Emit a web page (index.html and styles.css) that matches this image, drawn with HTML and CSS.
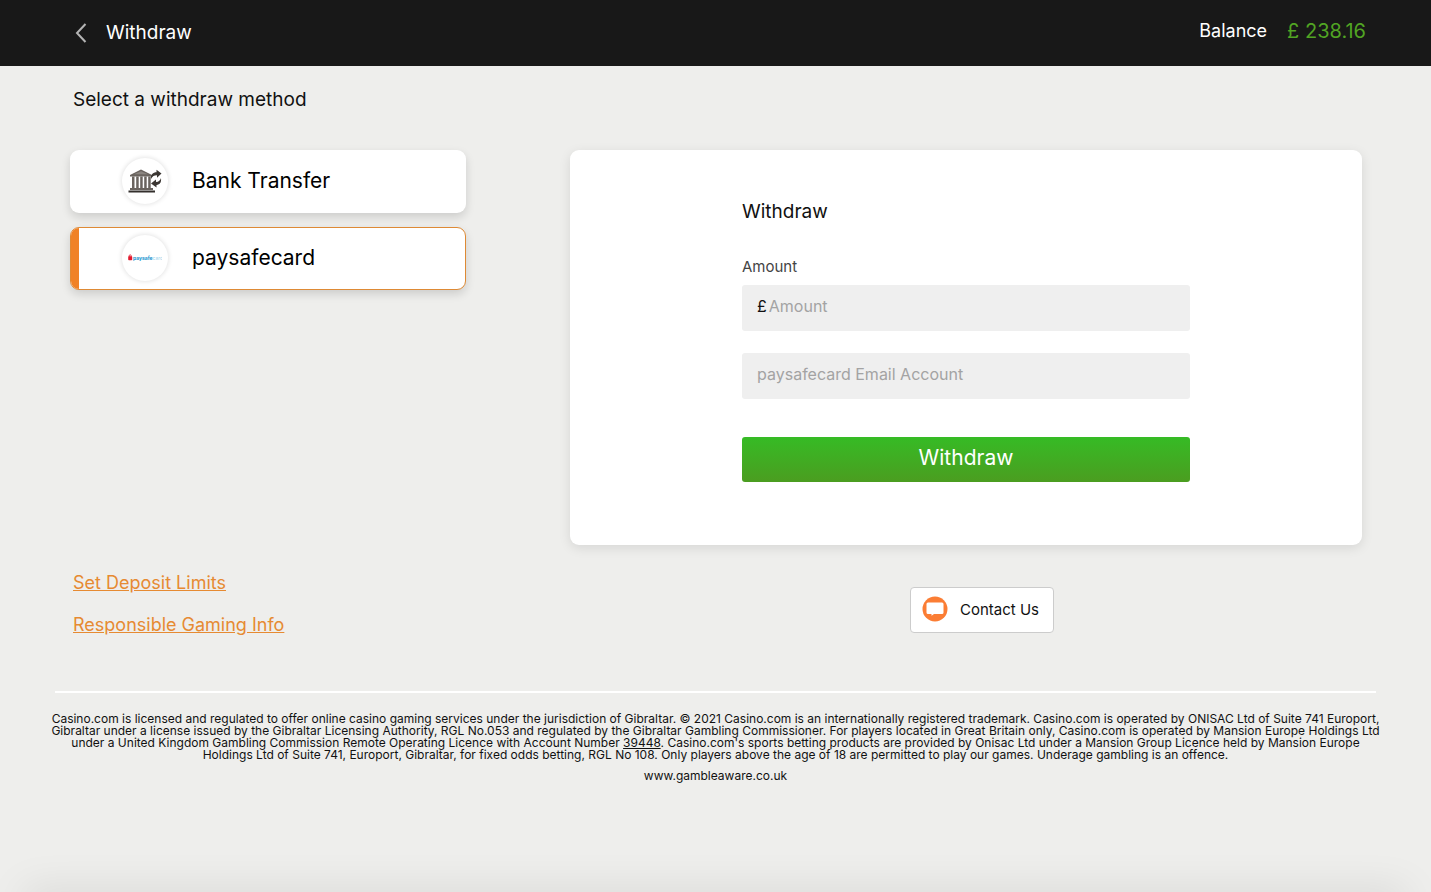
FILE: index.html
```html
<!DOCTYPE html>
<html lang="en">
	<head>
		<meta charset="utf-8">
		<meta name="viewport" content="width=device-width, initial-scale=1">
		<title>Withdraw</title>
		<link rel="stylesheet" href="styles.css">
	</head>

	<body>
		<header id="topbar">
			<a class="back" href="#">
				<svg width="12" height="20" viewBox="0 0 12 20" fill="none" stroke="#b4b4b4" stroke-width="2" aria-hidden="true">
					<path d="M10.5 1 L2 10 L10.5 19"/>
				</svg>
				<span>Withdraw</span>
			</a>
			<div class="balance">
				<span>Balance</span>
				<span class="sum">£ 238.16</span>
			</div>
		</header>

		<main>
			<h1>Select a withdraw method</h1>
			<div class="columns">
				<div class="methods">
					<button class="method" type="button">
						<span class="logo">
							<svg width="34" height="24" viewBox="0 0 34 24" aria-hidden="true">
								<g fill="#6a645f">
									<path d="M2 6 L13 0.5 L24 6 V7.5 H2 Z"/>
									<path d="M4 7.5 h2.5 v11.5 h-2.5z M8.2 7.5 h2.5 v11.5 h-2.5z M12.2 7.5 h2.5 v11.5 h-2.5z M16.2 7.5 h2.5 v11.5 h-2.5z M20.2 7.5 h2.5 v11.5 h-2.5z"/>
									<path d="M2 19 H25 V21 H2 Z"/>
									<path d="M0.5 21.5 H27 V23.5 H0.5 Z" fill="#332f2c"/>
								</g>
								<path d="M6 5.3 L13 2.2 L20 5.3 Z" fill="#8b8580"/>
								<g fill="#3b3632">
									<path d="M23 10 C22.5 5.5 25 3.2 28.5 3.2 V0.8 L33.5 4.5 L29 8.8 V6.2 C26 6.2 24.5 7.2 23 10 Z"/>
									<path d="M33 9 C33.5 13 32 15.7 28.5 16 V18.5 L23 14.5 L28 10.5 V13 C31 12.8 32 11.5 33 9 Z"/>
								</g>
							</svg>
						</span>
						<span>Bank Transfer</span>
					</button>
					<button class="method active" type="button">
						<span class="logo">
							<svg width="34" height="10" viewBox="0 0 34 10" aria-hidden="true">
								<path d="M1.2 4 V2.8 a1 1 0 0 1 2 0 V4" fill="none" stroke="#e2182d" stroke-width="0.8"/>
								<rect x="0.2" y="3.2" width="4" height="4" rx="0.8" fill="#e2182d"/>
								<text x="5" y="7" class="pay">paysafe<tspan class="card">card</tspan></text>
							</svg>
						</span>
						<span>paysafecard</span>
					</button>
				</div>

				<form class="panel">
					<h2>Withdraw</h2>
					<label for="amount">Amount</label>
					<div class="field">
						<span>£</span>
						<input id="amount" type="text" placeholder="Amount">
					</div>
					<div class="field">
						<input type="email" placeholder="paysafecard Email Account" aria-label="paysafecard Email Account">
					</div>
					<button class="submit" type="button">Withdraw</button>
				</form>
			</div>

			<div class="columns more">
				<nav>
					<a href="#">Set Deposit Limits</a>
					<a href="#">Responsible Gaming Info</a>
				</nav>
				<div class="help">
					<button class="contact" type="button">
						<svg width="26" height="26" viewBox="0 0 26 26" aria-hidden="true">
							<circle cx="13" cy="13" r="12.5" fill="#fb7d34"/>
							<path d="M6 6.5 H20 Q21.5 6.5 21.5 8 V16.5 Q21.5 18 20 18 H12 L9.5 19.8 V18 H6 Q4.5 18 4.5 16.5 V8 Q4.5 6.5 6 6.5 Z" fill="#fff"/>
						</svg>
						<span>Contact Us</span>
					</button>
				</div>
			</div>
		</main>

		<footer>
			<p>
				Casino.com is licensed and regulated to offer online casino gaming services under the jurisdiction of Gibraltar. © 2021 Casino.com is an internationally registered trademark. Casino.com is operated by ONISAC Ltd of Suite 741 Europort,<br>
				Gibraltar under a license issued by the Gibraltar Licensing Authority, RGL No.053 and regulated by the Gibraltar Gambling Commissioner. For players located in Great Britain only, Casino.com is operated by Mansion Europe Holdings Ltd<br>
				under a United Kingdom Gambling Commission Remote Operating Licence with Account Number <a href="#">39448</a>. Casino.com's sports betting products are provided by Onisac Ltd under a Mansion Group Licence held by Mansion Europe<br>
				Holdings Ltd of Suite 741, Europort, Gibraltar, for fixed odds betting, RGL No 108. Only players above the age of 18 are permitted to play our games. Underage gambling is an offence.
			</p>
			<p>www.gambleaware.co.uk</p>
		</footer>
	</body>
</html>
```

FILE: styles.css
```css
* {
	box-sizing: border-box;
}
body {
	margin: 0;
	min-height: 100vh;
	background: #eeeeec;
	color: #111;
	font-family: Inter, "Open Sans", sans-serif;
}
/* soft shade along the bottom of the window */
body::after {
	content: "";
	position: fixed;
	top: 100%;
	left: 24px;
	right: 24px;
	height: 20px;
	box-shadow: 0 0 40px rgba(0, 0, 0, 0.13);
}
button, input {
	font-family: inherit;
	color: inherit;
}
button {
	cursor: pointer;
}
h1, h2, p {
	margin: 0;
}
#topbar {
	display: flex;
	justify-content: space-between;
	height: 66px;
	padding: 0 65px 0 75px;
	background: #181818;
	color: white;
	font-size: 18px;
	line-height: 66px;
}
.back {
	display: flex;
	align-items: center;
	gap: 19px;
	color: white;
	font-size: 19px;
	text-decoration: none;
}
.balance {
	display: flex;
	gap: 20px;
	line-height: 62px;
}
.balance .sum {
	color: #51a423;
	font-size: 20px;
}
main {
	padding: 0 69px 0 70px;
}
h1 {
	padding: 22px 0 0 3px;
	font-size: 19px;
	font-weight: 400;
	line-height: 24px;
}
.columns {
	display: grid;
	grid-template-columns: 1fr 2fr;
	gap: 104px;
	margin-top: 38px;
}
.methods {
	display: flex;
	flex-direction: column;
	gap: 14px;
}
.method {
	position: relative;
	overflow: hidden;
	display: flex;
	align-items: center;
	gap: 24px;
	height: 63px;
	padding: 0 52px 2px;
	border: none;
	border-radius: 9px;
	background: white;
	color: black;
	box-shadow: 0 4px 10px rgba(0, 0, 0, 0.14);
	font-size: 21px;
	line-height: 24px;
}
.method.active {
	border: solid 1px #de8a35;
	padding: 0 51px 2px;
}
.method.active::before {
	content: "";
	position: absolute;
	top: -1px;
	bottom: -1px;
	left: -1px;
	width: 9px;
	background: #f08226;
}
.logo {
	display: flex;
	align-items: center;
	justify-content: center;
	width: 46px;
	height: 46px;
	border-radius: 50%;
	box-shadow: 0 0 4px 1px rgba(0, 0, 0, 0.1);
}
.pay {
	font-size: 5px;
	font-weight: 700;
	fill: #1593cf;
}
.pay .card {
	font-weight: 400;
	fill: #9ed3ec;
}
.panel {
	display: flex;
	flex-direction: column;
	min-height: 395px;
	padding: 50px 172px 63px;
	border-radius: 9px;
	background: white;
	box-shadow: 0 3px 12px rgba(0, 0, 0, 0.1);
}
.panel h2 {
	font-size: 19px;
	font-weight: 400;
	line-height: 24px;
}
.panel label {
	margin: 32px 0 7px;
	color: #444;
	font-size: 15px;
	line-height: 22px;
}
.field {
	display: flex;
	gap: 2px;
	height: 46px;
	padding: 0 15px 4px;
	border-radius: 3px;
	background: #efefef;
	font-size: 16px;
	line-height: 42px;
}
.field + .field {
	margin-top: 22px;
}
.field input {
	flex: 1;
	min-width: 0;
	padding: 0;
	border: none;
	outline: none;
	background: none;
	font-size: 16px;
}
.field input::placeholder {
	color: #a3a3a3;
}
.submit {
	height: 45px;
	margin-top: 38px;
	padding: 0 0 4px;
	border: none;
	border-radius: 3px;
	background: linear-gradient(#36bb25, #4b9d20);
	color: white;
	font-size: 21px;
}
.more {
	margin-top: 26px;
}
nav {
	display: flex;
	flex-direction: column;
	align-items: flex-start;
	gap: 18px;
	padding-left: 3px;
	font-size: 18px;
	line-height: 24px;
}
nav a {
	color: #e68a32;
}
.help {
	display: flex;
	justify-content: center;
	padding: 16px 0 0 32px;
}
.contact {
	display: flex;
	align-items: center;
	gap: 12px;
	height: 46px;
	padding: 0 14px 2px 11px;
	border: solid 1px #ccc;
	border-radius: 4px;
	background: white;
	font-size: 15px;
}
footer {
	margin: 54px 55px 0;
	padding: 20px 0 40px;
	border-top: solid 2px white;
	font-size: 12px;
	line-height: 12px;
	text-align: center;
}
/* the legal text runs slightly past the rule above it */
footer p {
	margin: 0 -8px;
}
footer p + p {
	margin-top: 9px;
}
footer a {
	color: inherit;
}

@media screen and (max-width: 1000px) {
	.columns {
		grid-template-columns: 1fr;
		gap: 32px;
	}
	main {
		padding: 0 20px;
	}
	.panel {
		padding: 32px;
	}
}
@media screen and (max-width: 1420px) {
	footer br {
		display: none;
	}
}
```
